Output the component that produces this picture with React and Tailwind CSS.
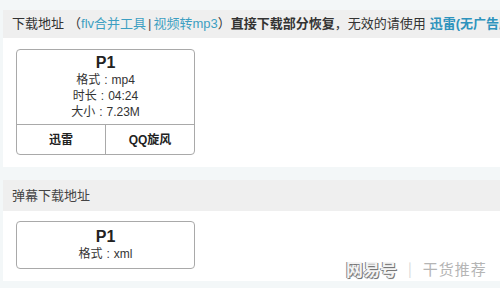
function Row({ label, value, cls = "text-[12px] leading-[16px]" }) {
  return (
    <div className={cls}>
      {label}
      <span className="mx-[4px]">:</span>
      {value}
    </div>
  );
}

export default function App() {
  const font = { fontFamily: '"Liberation Sans", "Noto Sans CJK SC", sans-serif' };
  return (
    <div className="relative w-[500px] h-[288px] overflow-hidden bg-[#f3f7f8] pt-[10px] pl-[3px]" style={font}>
      <div className="bg-white">
        <div className="h-[28px] bg-[#efefef] flex items-center pl-[9px] text-[13px] text-[#333] whitespace-nowrap overflow-hidden">
          <span>下载地址</span>
          <span className="ml-[4px]">（</span>
          <span className="text-[#3d9fc2]">flv合并工具</span>
          <span className="text-[#555] mx-[2px]">|</span>
          <span className="text-[#3d9fc2]">视频转mp3</span>
          <span>）</span>
          <span className="font-bold">直接下载部分恢复</span>
          <span>，无效的请使用</span>
          <span className="ml-[4px] font-bold text-[#2e93bd]">迅雷(无广告版)</span>
        </div>
        <div className="pt-[11px] pb-[12px] pl-[13px]">
          <div className="w-[179px] border border-[#a9a9a9] rounded-[4px] text-[#333]">
            <div className="pt-[4px] pb-[4px] flex flex-col items-center">
              <div className="text-[16px] leading-[18px] font-bold text-[#222]">P1</div>
              <Row label="格式" value="mp4" />
              <Row label="时长" value="04:24" />
              <Row label="大小" value="7.23M" />
            </div>
            <div className="flex border-t border-[#a9a9a9] h-[30px] text-[12px] font-bold text-[#222]">
              <div className="flex-1 flex items-center justify-center border-r border-[#a9a9a9]">迅雷</div>
              <div className="flex-1 flex items-center justify-center">QQ旋风</div>
            </div>
          </div>
        </div>
      </div>
      <div className="h-[13px]" />
      <div className="bg-white">
        <div className="h-[31px] bg-[#efefef] flex items-center pl-[9px] text-[13px] text-[#444]">弹幕下载地址</div>
        <div className="pt-[10px] pb-[12px] pl-[13px]">
          <div className="w-[179px] border border-[#a9a9a9] rounded-[4px] text-[#333] pt-[6px] pb-[6px] flex flex-col items-center">
            <div className="text-[16px] leading-[18px] font-bold text-[#222]">P1</div>
            <Row label="格式" value="xml" />
          </div>
        </div>
      </div>
      <div className="absolute left-[346px] top-[256px] flex items-center whitespace-nowrap" style={{ fontFamily: '"Noto Sans CJK SC", sans-serif' }}>
        <span className="text-[17px] font-bold text-[#f4f4f4] [text-shadow:_-1px_0_0_#8a8a8a,_1px_1px_0_#777,_0_1px_1px_#999]">网易号</span>
        <span className="mx-[11px] text-[14px] text-[#d6d6d6]">|</span>
        <span className="text-[15px] text-[#b5b5b5] tracking-[1px]">干货推荐</span>
      </div>
    </div>
  );
}
